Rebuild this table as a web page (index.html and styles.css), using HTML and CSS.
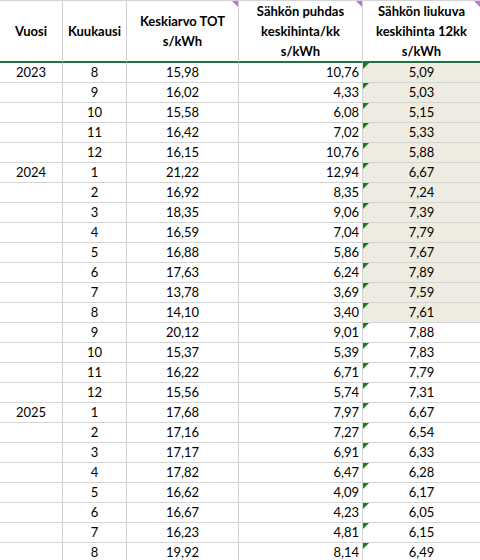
FILE: index.html
```html
<!DOCTYPE html>
<html lang="fi">
<head>
<meta charset="utf-8">
<title>Sähkön hinta</title>
<link rel="stylesheet" href="styles.css">
</head>
<body>
<table class="sheet">
  <colgroup>
    <col class="c1"><col class="c2"><col class="c3"><col class="c4"><col class="c5">
  </colgroup>
  <thead>
    <tr>
      <th>Vuosi</th>
      <th>Kuukausi</th>
      <th class="note">Keskiarvo TOT<br>s/kWh</th>
      <th class="note">Sähkön puhdas<br>keskihinta/kk<br>s/kWh</th>
      <th class="note">Sähkön liukuva<br>keskihinta 12kk<br>s/kWh</th>
    </tr>
  </thead>
  <tbody>
    <tr><td>2023</td><td>8</td><td>15,98</td><td class="r">10,76</td><td class="w sh">5,09</td></tr>
    <tr><td></td><td>9</td><td>16,02</td><td class="r">4,33</td><td class="w sh">5,03</td></tr>
    <tr><td></td><td>10</td><td>15,58</td><td class="r">6,08</td><td class="w sh">5,15</td></tr>
    <tr><td></td><td>11</td><td>16,42</td><td class="r">7,02</td><td class="w sh">5,33</td></tr>
    <tr><td></td><td>12</td><td>16,15</td><td class="r">10,76</td><td class="w sh">5,88</td></tr>
    <tr><td>2024</td><td>1</td><td>21,22</td><td class="r">12,94</td><td class="w sh">6,67</td></tr>
    <tr><td></td><td>2</td><td>16,92</td><td class="r">8,35</td><td class="w sh">7,24</td></tr>
    <tr><td></td><td>3</td><td>18,35</td><td class="r">9,06</td><td class="w sh">7,39</td></tr>
    <tr><td></td><td>4</td><td>16,59</td><td class="r">7,04</td><td class="w sh">7,79</td></tr>
    <tr><td></td><td>5</td><td>16,88</td><td class="r">5,86</td><td class="w sh">7,67</td></tr>
    <tr><td></td><td>6</td><td>17,63</td><td class="r">6,24</td><td class="w sh">7,89</td></tr>
    <tr><td></td><td>7</td><td>13,78</td><td class="r">3,69</td><td class="w sh">7,59</td></tr>
    <tr><td></td><td>8</td><td>14,10</td><td class="r">3,40</td><td class="w sh">7,61</td></tr>
    <tr><td></td><td>9</td><td>20,12</td><td class="r">9,01</td><td class="w">7,88</td></tr>
    <tr><td></td><td>10</td><td>15,37</td><td class="r">5,39</td><td class="w">7,83</td></tr>
    <tr><td></td><td>11</td><td>16,22</td><td class="r">6,71</td><td class="w">7,79</td></tr>
    <tr><td></td><td>12</td><td>15,56</td><td class="r">5,74</td><td class="w">7,31</td></tr>
    <tr><td>2025</td><td>1</td><td>17,68</td><td class="r">7,97</td><td class="w">6,67</td></tr>
    <tr><td></td><td>2</td><td>17,16</td><td class="r">7,27</td><td class="w">6,54</td></tr>
    <tr><td></td><td>3</td><td>17,17</td><td class="r">6,91</td><td class="w">6,33</td></tr>
    <tr><td></td><td>4</td><td>17,82</td><td class="r">6,47</td><td class="w">6,28</td></tr>
    <tr><td></td><td>5</td><td>16,62</td><td class="r">4,09</td><td class="w">6,17</td></tr>
    <tr><td></td><td>6</td><td>16,67</td><td class="r">4,23</td><td class="w">6,05</td></tr>
    <tr><td></td><td>7</td><td>16,23</td><td class="r">4,81</td><td class="w">6,15</td></tr>
    <tr><td></td><td>8</td><td>19,92</td><td class="r">8,14</td><td class="w">6,49</td></tr>
  </tbody>
</table>
</body>
</html>
```

FILE: styles.css
```css
html, body {
  margin: 0;
  padding: 0;
  background: #ffffff;
  overflow: hidden;
}

.sheet {
  border-collapse: separate;
  border-spacing: 0;
  table-layout: fixed;
  width: 481px;
  font-family: Lato, "Liberation Sans", sans-serif;
  font-size: 13px;
  color: #000000;
  border-top: 1px solid #d4d4d4;
}

.c1 { width: 63px; }
.c2 { width: 64px; }
.c3 { width: 112px; }
.c4 { width: 124px; }
.c5 { width: 118px; }

.sheet th,
.sheet td {
  box-sizing: border-box;
  padding: 0;
  border-right: 1px solid #d4d4d4;
  border-bottom: 1px solid #d4d4d4;
  text-align: center;
  white-space: nowrap;
  position: relative;
}

.sheet th {
  height: 61px;
  font-weight: 700;
  line-height: 20px;
  vertical-align: middle;
  border-bottom: 2px solid #217346;
}

.sheet td {
  height: 20px;
  line-height: 19px;
  vertical-align: bottom;
}

.sheet td.r {
  text-align: right;
  padding-right: 3px;
}

.sheet td.sh {
  background: #eeece1;
}

.note::after {
  content: "";
  position: absolute;
  top: 0;
  right: 0;
  width: 0;
  height: 0;
  border-top: 6px solid #b576d9;
  border-left: 6px solid transparent;
}

.w::before {
  content: "";
  position: absolute;
  top: 0;
  left: 0;
  width: 0;
  height: 0;
  border-top: 6px solid #1a7d1a;
  border-right: 6px solid transparent;
}
```
